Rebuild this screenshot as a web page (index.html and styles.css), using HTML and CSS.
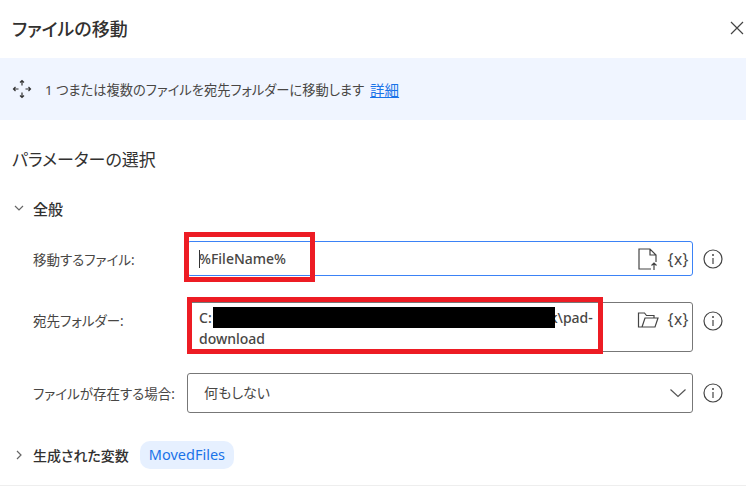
FILE: index.html
```html
<!DOCTYPE html>
<html lang="ja">
<head>
  <meta charset="UTF-8">
  <meta name="viewport" content="width=device-width, initial-scale=1.0">
  <title>ファイルの移動</title>
  <link rel="stylesheet" href="styles.css">
</head>
<body>
  <div class="dialog">
    <div class="header">
      <h1>ファイルの移動</h1>
      <svg class="close" width="16" height="16" viewBox="0 0 16 16"><path d="M2 2l12 12M14 2L2 14"/></svg>
    </div>

    <div class="banner">
      <svg class="move-icon" width="20" height="20" viewBox="0 0 20 20">
        <path d="M10 1.500v5M8 3.500l2-2 2 2M10 18.500v-5M8 16.500l2 2 2-2M1.500 10h5M3.500 8l-2 2 2 2M18.500 10h-5M16.500 8l2 2-2 2"/>
      </svg>
      <p>1 つまたは複数のファイルを宛先フォルダーに移動します</p>
      <a href="#">詳細</a>
    </div>

    <h2>パラメーターの選択</h2>

    <div class="group-title group-general">
      <svg class="chevron" width="10" height="10" viewBox="0 0 10 10"><path d="M1 3l4 4 4-4"/></svg>
      <span>全般</span>
    </div>

    <div class="row row-file">
      <label>移動するファイル:</label>
      <div class="field field-active">
        <span class="value"><i class="caret"></i>%FileName%</span>
        <svg class="field-icon" width="22" height="24" viewBox="0 0 22 24">
          <path d="M14 22H2V2h11l6 6v7M13 2v6h6M17 23v-7M14.500 18.500L17 16l2.500 2.500"/>
        </svg>
        <span class="var">{x}</span>
      </div>
      <svg class="info" width="20" height="20" viewBox="0 0 20 20"><circle cx="10" cy="10" r="9"/><path d="M10 9v6"/><circle class="dot" cx="10" cy="6" r="1"/></svg>
    </div>

    <div class="row row-folder">
      <label>宛先フォルダー:</label>
      <div class="field field-tall">
        <span class="value">C:<span class="redact"></span><span class="tail">k\pad-</span><br>download</span>
        <svg class="field-icon" width="22" height="18" viewBox="0 0 22 18">
          <path d="M5 16H1.500V2h6l2 2.500h7.500V7M5 16L8 7h13l-3 9z"/>
        </svg>
        <span class="var">{x}</span>
      </div>
      <svg class="info" width="20" height="20" viewBox="0 0 20 20"><circle cx="10" cy="10" r="9"/><path d="M10 9v6"/><circle class="dot" cx="10" cy="6" r="1"/></svg>
    </div>

    <div class="row row-exists">
      <label>ファイルが存在する場合:</label>
      <div class="field field-select">
        <span class="value">何もしない</span>
        <svg class="select-arrow" width="18" height="10" viewBox="0 0 18 10"><path d="M1.500 1.500L9 8.500l7.500-7"/></svg>
      </div>
      <svg class="info" width="20" height="20" viewBox="0 0 20 20"><circle cx="10" cy="10" r="9"/><path d="M10 9v6"/><circle class="dot" cx="10" cy="6" r="1"/></svg>
    </div>

    <div class="group-title group-vars">
      <svg class="chevron" width="10" height="12" viewBox="0 0 10 12"><path d="M3 2l4 4-4 4"/></svg>
      <span>生成された変数</span>
      <span class="chip">MovedFiles</span>
    </div>

    <!-- annotations drawn on top of the screenshot -->
    <div class="mark mark-file"></div>
    <div class="mark mark-folder"></div>
  </div>
</body>
</html>
```

FILE: styles.css
```css
* {
  box-sizing: border-box;
}
body {
  margin: 0;
  background-color: #fff;
  font-family: 'Noto Sans', 'Noto Sans CJK JP', sans-serif;
  font-feature-settings: "palt";
  color: #323130;
  overflow: hidden;
}
svg {
  flex: none;
  fill: none;
  stroke: #444;
  stroke-width: 1.2;
}
.dialog {
  position: relative;
  width: 746px;
  height: 486px;
  border-bottom: 1px solid #eee;
}
.header {
  height: 58px;
  padding: 0 1px 2px 12px;
  display: flex;
  align-items: center;
  justify-content: space-between;
}
h1 {
  margin: 0;
  font-size: 18px;
  font-weight: 500;
}
.banner {
  height: 62px;
  padding: 0 0 0 12px;
  display: flex;
  align-items: center;
  background-color: #f0f5ff;
  font-size: 13.25px;
}
.banner p {
  margin: 0 6px 0 13px;
  color: #484644;
}
.banner a {
  color: #1a73e8;
  font-size: 14.5px;
}
.move-icon {
  stroke: #333;
}
h2 {
  margin: 28px 0 0 12px;
  height: 24px;
  font-size: 17px;
  line-height: 24px;
  font-weight: 400;
}
.group-title {
  display: flex;
  align-items: center;
  margin-left: 14px;
  height: 24px;
  font-size: 15px;
  font-weight: 500;
}
.group-title .chevron {
  margin-right: 9px;
  stroke: #666;
}
.group-general {
  margin-top: 24px;
}
.row {
  display: flex;
  align-items: center;
  margin-left: 33px;
}
.row label {
  width: 154px;
  font-size: 13.5px;
  color: #484644;
}
.row-file {
  margin-top: 21px;
}
.row-folder {
  margin-top: 26px;
  align-items: flex-start;
}
.row-folder label {
  margin-top: 8px;
}
.row-folder .info {
  margin-top: 9px;
}
.row-exists {
  margin-top: 21px;
}
.field {
  position: relative;
  width: 506px;
  height: 35px;
  padding: 0 3px 0 11px;
  display: flex;
  align-items: center;
  border: 1px solid #777;
  border-radius: 3px;
  font-size: 14px;
}
.field-active {
  border: 1.5px solid #3b82f6;
}
.field-tall {
  height: 50px;
  align-items: flex-start;
  padding-top: 4px;
}
.field-select {
  height: 40px;
  padding-left: 16px;
  justify-content: space-between;
}
.value {
  flex: 1;
  font-weight: 500;
  line-height: 22px;
  color: #484644;
}
.field-tall .value {
  line-height: 21px;
  white-space: nowrap;
}
.field-select .value {
  font-weight: 400;
}
.caret {
  display: inline-block;
  width: 1px;
  height: 18px;
  margin-right: -1px;
  vertical-align: -4px;
  background-color: #333;
}
.redact {
  display: inline-block;
  position: relative;
  z-index: 1;
  width: 342px;
  height: 21px;
  margin-left: 1px;
  vertical-align: top;
  background-color: #000;
}
.tail {
  margin-left: -5px;
}
.field-icon {
  margin-right: 9px;
}
.field-tall .field-icon {
  margin-top: 4px;
}
.var {
  font-size: 15.5px;
  color: #484644;
  letter-spacing: 0.5px;
}
.field-tall .var {
  line-height: 24px;
}
.select-arrow {
  stroke: #555;
  margin-right: 2px;
}
.info {
  margin-left: 10px;
  stroke: #444;
}
.info .dot {
  fill: #444;
  stroke: none;
}
.group-vars {
  margin-top: 28px;
  height: 28px;
  font-size: 14px;
}
.chip {
  margin-left: 11px;
  height: 28px;
  padding: 0 9px;
  font-size: 14.5px;
  line-height: 27px;
  border-radius: 10px;
  background-color: #e6f0ff;
  color: #1a73e8;
  font-weight: 400;
}
.mark {
  position: absolute;
  border: 5px solid #ed1c24;
}
.mark-file {
  left: 184px;
  top: 232px;
  width: 131px;
  height: 50px;
}
.mark-folder {
  left: 187px;
  top: 297px;
  width: 416px;
  height: 57px;
}
```
